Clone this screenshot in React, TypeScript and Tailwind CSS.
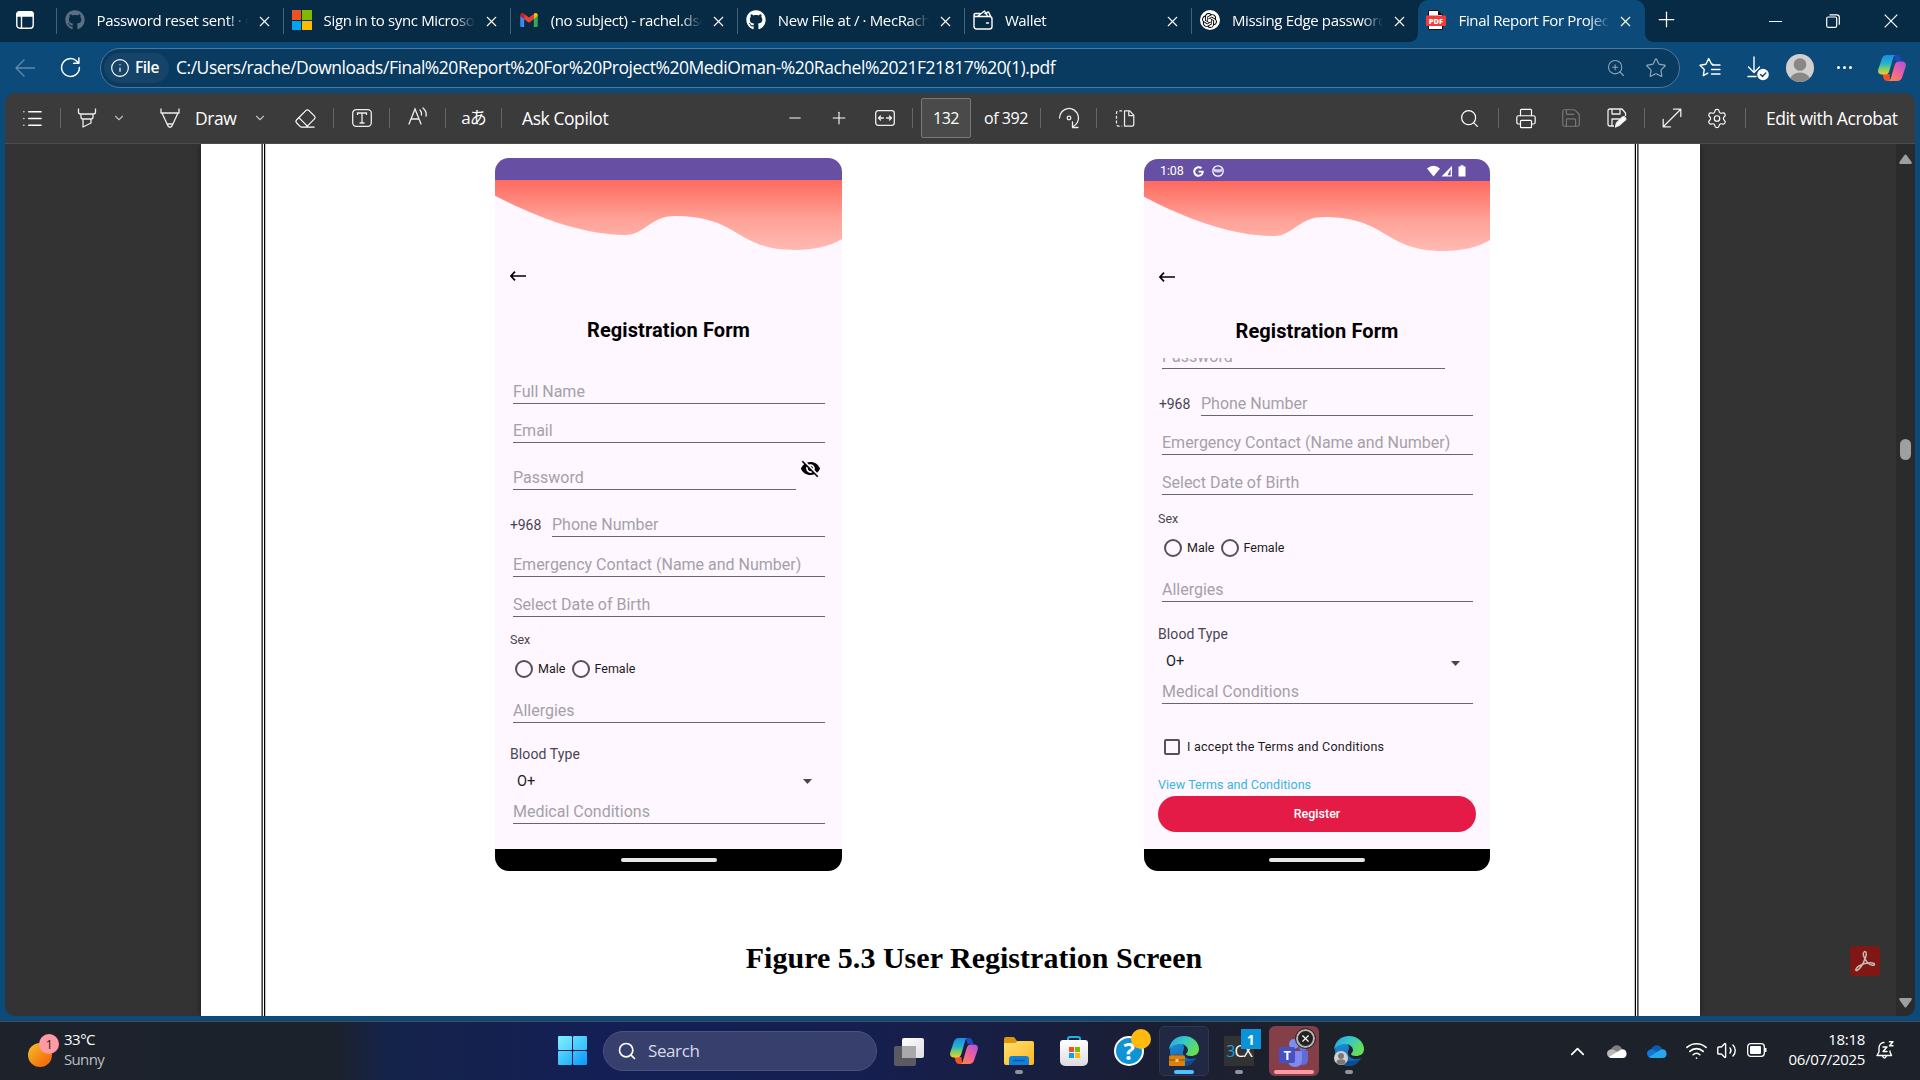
import type { ReactNode } from "react";
import { List, Eraser, Search, Printer, Save, Settings, Star, ZoomIn, Info, ChevronDown, ChevronUp, Wifi, Volume2, Minus, Plus, X } from "lucide-react";
import { FaGithub, FaGoogle } from "react-icons/fa";
import { SiOpenai } from "react-icons/si";
import { MdVisibilityOff } from "react-icons/md";

function Copilot({ id, className }: { id: string; className: string }) {
  return (
    <svg viewBox="0 0 28 28" className={className}>
      <defs>
        <linearGradient id={id + "a"} x1="0" y1="0" x2="0" y2="1">
          <stop offset="0" stopColor="#1a8be8" />
          <stop offset=".45" stopColor="#27b5c8" />
          <stop offset=".75" stopColor="#8fd05c" />
          <stop offset="1" stopColor="#f7c92a" />
        </linearGradient>
        <linearGradient id={id + "b"} x1="1" y1="0" x2="0" y2="1">
          <stop offset="0" stopColor="#a552e8" />
          <stop offset=".5" stopColor="#f0609a" />
          <stop offset="1" stopColor="#fb8f3c" />
        </linearGradient>
      </defs>
      <path d="M16 1h3c2 0 3 1.500 3.500 3l1 3h-6z" fill="#1b49c4" />
      <path d="M12 27H9c-2 0-3-1.500-3.500-3l-1-4h7z" fill="#f4502c" />
      <path d="M9 1h9c-2 0-2.700 2-3.200 4l-3.500 12c-.7 2.500-2 3.500-4.300 3.500H4c-3.500 0-4.500-2.500-3.600-5.500L3.800 5C4.700 2.200 6 1 9 1z" fill={`url(#${id}a)`} />
      <path d="M19 27h-9c2 0 2.700-2 3.200-4l3.500-12c.7-2.500 2-3.500 4.300-3.500h3c3.500 0 4.500 2.500 3.600 5.500L24.200 23c-.9 2.800-2.200 4-5.200 4z" fill={`url(#${id}b)`} />
    </svg>
  );
}

function Gmail() {
  return (
    <svg viewBox="0 0 20 16" className="h-[14px] w-[18px]">
      <path d="M0 3v11.500c0 .8.600 1.500 1.400 1.500H4.500V6z" fill="#4285f4" />
      <path d="M20 3v11.500c0 .8-.6 1.500-1.400 1.500h-3.100V6z" fill="#34a853" />
      <path d="M0 2.500C0 .3 2.300-.8 4 .5l.5.4v6L0 3.500z" fill="#c5221f" />
      <path d="M20 2.500c0-2.200-2.300-3.300-4-2l-.5.4v6L20 3.500z" fill="#fbbc04" />
      <path d="M4.500 1 10 5l5.500-4v6L10 11 4.500 7z" fill="#ea4335" />
    </svg>
  );
}

function FourSquares({ className, gap }: { className: string; gap: string }) {
  return (
    <div className={"grid grid-cols-2 grid-rows-2 " + gap + " " + className}>
      <div className="bg-[#f25022]" />
      <div className="bg-[#7fba00]" />
      <div className="bg-[#00a4ef]" />
      <div className="bg-[#ffb900]" />
    </div>
  );
}

function PdfIcon() {
  return (
    <svg viewBox="0 0 20 20" className="size-5">
      <path d="M2.500.5h9.500l4.500 4.500v14.500H2.500z" fill="#fff" stroke="#111" />
      <path d="M12 .5V5h4.500z" fill="#111" />
      <rect x="0" y="5.500" width="20" height="10.500" rx="1.200" fill="#f23b3b" />
      <text x="10" y="13.600" textAnchor="middle" fontFamily="Open Sans, sans-serif" fontWeight="800" fontSize="7.500" fill="#fff">PDF</text>
    </svg>
  );
}

function Tab({ icon, title }: { icon: ReactNode; title: string }) {
  return (
    <div className="flex h-[42px] w-[227.1px] shrink-0 items-center">
      <div className="mb-px h-[26px] w-px bg-[#44637b]" />
      <div className="mb-0.5 ml-[8px] flex size-5 items-center justify-center">{icon}</div>
      <div className="mb-0.5 ml-3 w-[151px] overflow-hidden whitespace-nowrap text-[15px] leading-5 tracking-[-0.36px] [mask-image:linear-gradient(to_right,black_86%,transparent)]">{title}</div>
      <X className="ml-[8px] size-[17px]" strokeWidth={1.5} />
    </div>
  );
}

function Sep({ className = "" }: { className?: string }) {
  return <div className={"h-5 w-px shrink-0 bg-[#666] " + className} />;
}

function Cell({ className, children }: { className: string; children: ReactNode }) {
  return <div className={"flex shrink-0 items-center justify-center " + className}>{children}</div>;
}

function TabStrip() {
  return (
    <div className="flex h-[42px] shrink-0 bg-[#072a45]">
      <div className="flex w-[55.5px] shrink-0 items-center pl-[15.5px]">
        <svg viewBox="0 0 18 18" className="mb-0.5 size-[18px]" fill="none" stroke="#fff" strokeWidth="1.400">
          <rect x=".8" y=".8" width="16.400" height="16.400" rx="3" />
          <path d="M1 2.500C1 1.500 2 1 3 1h12c1 0 2 .5 2 1.500V5H1z" fill="#fff" />
          <path d="M5.500 5v12" />
        </svg>
      </div>
      <Tab icon={<FaGithub className="size-5 text-[#5b7183]" />} title="Password reset sent! · GitHub" />
      <Tab icon={<FourSquares className="size-5" gap="gap-px" />} title="Sign in to sync Microsoft Edge" />
      <Tab icon={<Gmail />} title="(no subject) - rachel.dsouza" />
      <Tab icon={<FaGithub className="size-5" />} title="New File at / · MecRachel" />
      <Tab
        icon={
          <svg viewBox="0 0 20 20" className="size-5" fill="none" stroke="#fff" strokeWidth="1.400" strokeLinecap="round" strokeLinejoin="round">
            <path d="M1 5v11.500A2.500 2.500 0 0 0 3.500 19h13a2.500 2.500 0 0 0 2.500-2.500V9a2.500 2.500 0 0 0-2.500-2.500H2.500a1.500 1.500 0 0 1 0-3H7M5 6l6.500-5 3 5M12 3.500l3.500-1.500 2 4M13.500 13h2" />
          </svg>
        }
        title="Wallet"
      />
      <Tab
        icon={
          <div className="flex size-5 items-center justify-center rounded-full bg-white text-black">
            <SiOpenai className="size-[15px]" />
          </div>
        }
        title="Missing Edge passwords"
      />
      <div className="relative flex w-[227px] shrink-0 items-center rounded-t-[10px] bg-[#0c4a7a]">
        <div className="absolute -left-2 bottom-0 size-2 bg-[radial-gradient(circle_at_0_0,transparent_7.500px,#0c4a7a_8px)]" />
        <div className="absolute -right-2 bottom-0 size-2 bg-[radial-gradient(circle_at_100%_0,transparent_7.500px,#0c4a7a_8px)]" />
        <div className="mb-0.5 ml-[7.5px]"><PdfIcon /></div>
        <div className="mb-0.5 ml-[13px] w-[151px] overflow-hidden whitespace-nowrap text-[15px] leading-5 tracking-[-0.36px] [mask-image:linear-gradient(to_right,black_86%,transparent)]">Final Report For Project Medi</div>
        <X className="ml-[7px] size-[17px]" strokeWidth={1.5} />
      </div>
      <Cell className="w-[42px]"><Plus className="mb-[3px] size-[25px]" strokeWidth={1.2} /></Cell>
      <Cell className="ml-[65px] w-[46px]"><div className="h-px w-[13px] bg-white" /></Cell>
      <Cell className="ml-[12px] w-[46px]">
        <svg viewBox="0 0 14 14" className="size-[14px]" fill="none" stroke="#fff" strokeWidth="1.200">
          <rect x=".7" y="3" width="10" height="10.300" rx="1.500" />
          <path d="M3.500.8h7.300a2.500 2.500 0 0 1 2.500 2.500v7.500" />
        </svg>
      </Cell>
      <Cell className="ml-[12px] w-[46px]">
        <svg viewBox="0 0 14 14" className="size-[14px]" stroke="#fff" strokeWidth="1.200"><path d="M.7.7l12.600 12.600M13.300.7.7 13.300" /></svg>
      </Cell>
    </div>
  );
}

function AddressBar() {
  return (
    <div className="flex h-[51px] shrink-0 items-center bg-[#0c4a7a]">
      <Cell className="w-[50px]">
        <svg viewBox="0 0 20 18" className="h-[18px] w-5" fill="none" stroke="#5f8bae" strokeWidth="1.300" strokeLinecap="round" strokeLinejoin="round"><path d="M9 1 1 9l8 8M1 9h18.500" /></svg>
      </Cell>
      <Cell className="w-10">
        <svg viewBox="0 0 20 20" className="size-[21px]" fill="none" stroke="#fff" strokeWidth="1.400" strokeLinecap="round" strokeLinejoin="round"><path d="M18.500 10A8.500 8.500 0 1 1 16 4l2 2M18 1v5h-5" /></svg>
      </Cell>
      <div className="ml-[10px] flex h-10 w-[1580px] shrink-0 items-center rounded-full border border-[#507797] bg-[#093a5f]">
        <div className="ml-[3px] flex h-[30px] w-[65px] items-center rounded-full bg-[#154468] pl-[6px]">
          <Info className="size-[20px]" strokeWidth={1.4} />
          <span className="mb-px ml-[5px] text-[15.5px] font-semibold leading-5 tracking-[-0.5px]">File</span>
        </div>
        <div className="mb-[2px] ml-[7px] w-[900px] whitespace-nowrap text-[17.5px] leading-6 tracking-[-0.475px]">C:/Users/rache/Downloads/Final%20Report%20For%20Project%20MediOman-%20Rachel%2021F21817%20(1).pdf</div>
        <ZoomIn className="ml-[530px] size-5 text-[#8fa8bb]" strokeWidth={1.3} />
        <Star className="ml-[19px] size-[22px] text-[#8fa8bb]" strokeWidth={1.3} />
      </div>
      <Cell className="ml-[19px] w-[22px]">
        <svg viewBox="0 0 22 22" className="size-[22px]" fill="none" stroke="#fff" strokeWidth="1.400" strokeLinecap="round" strokeLinejoin="round">
          <path d="M14 7.500 12.500 7 9.700 1.500 6.900 7.300 1 8.200l4.300 4.200-1 6.200 4.500-2.400M13.500 8H21M12.500 12.500H21M12.500 17H21" />
        </svg>
      </Cell>
      <Cell className="ml-[25px] w-[24px]">
        <svg viewBox="0 0 24 26" className="h-[26px] w-6" fill="none" stroke="#fff" strokeWidth="1.400" strokeLinecap="round" strokeLinejoin="round">
          <path d="M8 2v15M2.500 12 8 17.500l5.500-5.500M2 21.500h8" />
          <circle cx="17" cy="19.500" r="5.800" fill="#fff" stroke="none" />
          <path d="m14.500 19.500 2 2 3.300-3.500" stroke="#0c4a7a" />
        </svg>
      </Cell>
      <Cell className="ml-[16px] w-7">
        <svg viewBox="0 0 28 28" className="size-7">
          <clipPath id="avatar"><circle cx="14" cy="14" r="14" /></clipPath>
          <g clipPath="url(#avatar)">
            <rect width="28" height="28" fill="#d2d0ce" />
            <circle cx="14" cy="10.500" r="6.300" fill="#8a8886" />
            <ellipse cx="14" cy="25" rx="9.500" ry="6.500" fill="#8a8886" />
          </g>
        </svg>
      </Cell>
      <Cell className="ml-[22px] w-4 gap-[3px]">
        <span className="size-[3px] rounded-full bg-white" />
        <span className="size-[3px] rounded-full bg-white" />
        <span className="size-[3px] rounded-full bg-white" />
      </Cell>
      <Cell className="ml-[26px] w-7"><Copilot id="top" className="size-7" /></Cell>
    </div>
  );
}

function PdfToolbar() {
  return (
    <div className="flex h-[51px] shrink-0 items-center border-b border-[#4d4d4d] bg-[#3b3b3b] text-[17.5px] tracking-[-0.43px]">
      <Cell className="w-[55px]"><List className="size-[23px]" strokeWidth={1.4} /></Cell>
      <Sep />
      <Cell className="w-[51px]">
        <svg viewBox="0 0 20 20" className="size-5" fill="none" stroke="#eee" strokeWidth="1.300" strokeLinejoin="round"><path d="M1.500.5V4q0 2 2 2h13q2 0 2-2V.5M4 6v3q0 2 2 2h8q2 0 2-2V6M6 11v8l8-4v-4" /></svg>
      </Cell>
      <Cell className="w-[14px]"><ChevronDown className="size-[14px] text-[#bbb]" strokeWidth={2} /></Cell>
      <Cell className="ml-[20px] w-[48px]">
        <svg viewBox="0 0 20 20" className="size-5" fill="none" stroke="#eee" strokeWidth="1.300" strokeLinejoin="round"><path d="M1 .5V5h18V.5M2 5l6 13q2 2.500 4 0l6-13M7.500 16h5" /></svg>
      </Cell>
      <span className="ml-[1px] w-[42px]">Draw</span>
      <Cell className="ml-[16px] w-[14px]"><ChevronDown className="size-[14px] text-[#bbb]" strokeWidth={2} /></Cell>
      <Cell className="ml-[11px] w-[54px]"><Eraser className="size-[23px]" strokeWidth={1.2} /></Cell>
      <Sep className="ml-px" />
      <Cell className="w-[55px]">
        <svg viewBox="0 0 20 20" className="size-5" fill="none" stroke="#eee" strokeWidth="1.300"><rect x=".7" y="1.700" width="18.600" height="16.600" rx="3.500" /><path d="M5.500 7V5h9v2M10 5v10M7.500 15h5" /></svg>
      </Cell>
      <Sep />
      <Cell className="w-[55px]">
        <svg viewBox="0 0 20 20" className="mb-1 size-5" fill="none" stroke="#eee" strokeWidth="1.300" strokeLinecap="round"><path d="m1 18 6-15 6 15M3 13h8M12 4q2 2 1.500 5M15 2q4 3.500 3 8" /></svg>
      </Cell>
      <Sep />
      <Cell className="w-[55px]"><span className="font-['Open_Sans','Noto_Sans_CJK_JP',sans-serif] text-[17px] tracking-[-1px]">aあ</span></Cell>
      <Sep />
      <span className="ml-[20px] w-[92px] whitespace-nowrap">Ask Copilot</span>
      <Cell className="ml-[171px] w-5"><Minus className="size-[18px]" strokeWidth={1.3} /></Cell>
      <Cell className="ml-[24px] w-5"><Plus className="size-[20px]" strokeWidth={1.3} /></Cell>
      <Cell className="ml-[26px] w-5">
        <svg viewBox="0 0 20 16" className="h-4 w-5" fill="none" stroke="#eee" strokeWidth="1.300" strokeLinecap="round" strokeLinejoin="round"><rect x=".7" y=".7" width="18.600" height="14.600" rx="2.500" /><path d="M5.500 6 3.500 8l2 2M3.500 8h5M14.500 6l2 2-2 2M16.500 8h-5" /></svg>
      </Cell>
      <Sep className="ml-[17px]" />
      <div className="ml-[8px] flex h-10 w-[50px] items-center justify-center rounded-[2px] border border-[#787878] bg-[#4a4a4a] text-[16px]">132</div>
      <span className="ml-[13px] w-[44px] whitespace-nowrap text-[16px]">of 392</span>
      <Sep className="ml-[12px]" />
      <Cell className="w-[55px]">
        <svg viewBox="0 0 22 22" className="size-[22px]" fill="none" stroke="#eee" strokeWidth="1.300" strokeLinecap="round" strokeLinejoin="round"><path d="M1.500 11a9.500 9.500 0 1 1 13 8.800M14.500 15v5.500H20" /><circle cx="11" cy="11" r="1.800" /></svg>
      </Cell>
      <Sep />
      <Cell className="w-[55px]">
        <svg viewBox="0 0 20 18" className="h-[17px] w-5" fill="none" stroke="#eee" strokeWidth="1.300" strokeLinejoin="round"><path d="M9.500 1H15l4.300 4.500V15q0 2-2 2H9.500zM14 1v5h5" /><path d="M7 1H3Q1 1 1 3v12q0 2 2 2h4" strokeDasharray="3 2" /></svg>
      </Cell>
      <Cell className="ml-[307px] w-[21px]"><Search className="size-[21px]" strokeWidth={1.4} /></Cell>
      <Sep className="ml-[18px]" />
      <Cell className="ml-[16px] w-[22px]"><Printer className="size-[23px]" strokeWidth={1.3} /></Cell>
      <Cell className="ml-[23px] w-[22px]"><Save className="size-[22px] text-[#777]" strokeWidth={1.3} /></Cell>
      <Cell className="ml-[24px] w-[22px]">
        <svg viewBox="0 0 20 20" className="size-5" fill="none" stroke="#eee" strokeWidth="1.300" strokeLinejoin="round"><path d="M18.500 8V5L15 1H3Q1 1 1 3v13q0 2 2 2h4M5 1v5h8V1M5 18v-7h8" /><path d="m8.500 19 1-4 6-6q2-1 3 1t-1 2.500l-5.500 5z" fill="#fff" /></svg>
      </Cell>
      <Sep className="ml-[16px]" />
      <Cell className="ml-[16px] w-[22px]">
        <svg viewBox="0 0 20 20" className="size-5" fill="none" stroke="#eee" strokeWidth="1.300" strokeLinecap="round" strokeLinejoin="round"><path d="M1.500 18.500l17-17M11.500 1.200h7.300v7.300M8.500 18.800H1.200v-7.300" /></svg>
      </Cell>
      <Cell className="ml-[23px] w-[22px]"><Settings className="size-[23px]" strokeWidth={1.3} /></Cell>
      <Sep className="ml-[17px]" />
      <span className="ml-[20px] whitespace-nowrap">Edit with Acrobat</span>
    </div>
  );
}

function Field({ label, className = "" }: { label: string; className?: string }) {
  return (
    <div className={"h-[23px] shrink-0 whitespace-nowrap border-b border-[#69656d] text-[16px] leading-[22px] text-[#a5a0a8] " + className}>{label}</div>
  );
}

function Wave() {
  return (
    <svg viewBox="0 0 347 70" preserveAspectRatio="none" className="block h-[70px] w-full shrink-0">
      <defs>
        <linearGradient id="coral" x1="0" y1="0" x2="0" y2="1">
          <stop offset="0" stopColor="#ff6a5f" />
          <stop offset=".55" stopColor="#ffa196" />
          <stop offset="1" stopColor="#ffbab3" />
        </linearGradient>
      </defs>
      <path d="M0 0V15.700C42 38 90 55 130 55 150 55 155 36 180 36 245 36 240 70 300 70 320 70 335 66 347 59V0z" fill="url(#coral)" />
    </svg>
  );
}

function PhoneHead() {
  return (
    <>
      <Wave />
      <svg viewBox="0 0 16 10" className="ml-[15px] mt-[21px] h-[10px] w-4 shrink-0" fill="none" stroke="#000" strokeWidth="1.700"><path d="M5 .6.900 5 5 9.400M1 5h15" /></svg>
      <div className="mt-[37px] h-6 shrink-0 text-center text-[20px] font-bold leading-6 tracking-[0.1px] text-black">Registration Form</div>
    </>
  );
}

function SexRow() {
  return (
    <div className="ml-[20px] mt-[10px] flex h-[18px] shrink-0 items-center text-[12.5px] leading-[18px] text-[#1d1b20]">
      <div className="size-[18px] rounded-full border-2 border-[#55515b]" />
      <span className="ml-[5px] w-[28px]">Male</span>
      <div className="ml-[5.5px] size-[18px] rounded-full border-2 border-[#55515b]" />
      <span className="ml-[5px]">Female</span>
    </div>
  );
}

function BloodRow({ className, arrow }: { className: string; arrow: string }) {
  return (
    <div className={"ml-[22px] mr-[30px] flex h-[18px] shrink-0 items-center justify-between text-[14.5px] leading-[18px] text-[#1d1b20] " + className}>
      <span className="mt-[2px]">O+</span>
      <svg viewBox="0 0 9 5" className={"h-[5px] w-[9px] " + arrow}><path d="M0 0h9L4.500 5z" fill="#49454f" /></svg>
    </div>
  );
}

function PhoneRow({ className }: { className: string }) {
  return (
    <div className={"flex h-[23px] shrink-0 " + className}>
      <span className="ml-[15px] w-[42px] text-[14px] leading-[22px] tracking-[-0.1px] text-[#49454f]">+968</span>
      <Field label="Phone Number" className="mr-[17px] flex-1" />
    </div>
  );
}

function NavBar() {
  return (
    <div className="mt-auto flex h-[22px] shrink-0 items-center justify-center bg-black">
      <div className="h-1 w-[96px] rounded-full bg-[#e8e8ea]" />
    </div>
  );
}

function PhoneOne() {
  return (
    <div className="ml-[229px] mt-[14px] flex h-[713px] w-[347px] shrink-0 flex-col overflow-hidden rounded-[14px] bg-[#fef7ff] font-['Roboto',sans-serif]">
      <div className="h-[22px] shrink-0 bg-[#6750a4]" />
      <PhoneHead />
      <Field label="Full Name" className="ml-[18px] mr-[17px] mt-[39px]" />
      <Field label="Email" className="ml-[18px] mr-[17px] mt-4" />
      <div className="ml-[18px] mt-4 flex h-[31px] shrink-0 items-end">
        <Field label="Password" className="w-[283px]" />
        <MdVisibilityOff className="mb-[11px] ml-[4px] size-[21px] text-black" />
      </div>
      <PhoneRow className="mt-6" />
      <Field label="Emergency Contact (Name and Number)" className="ml-[18px] mr-[17px] mt-[17px]" />
      <Field label="Select Date of Birth" className="ml-[18px] mr-[17px] mt-[17px]" />
      <div className="ml-[15px] mt-[13px] h-5 shrink-0 text-[12.5px] leading-5 text-[#49454f]">Sex</div>
      <SexRow />
      <Field label="Allergies" className="ml-[18px] mr-[17px] mt-[22px]" />
      <div className="ml-[15px] mt-[21px] h-5 shrink-0 text-[14px] leading-5 tracking-[0.1px] text-[#49454f]">Blood Type</div>
      <BloodRow className="mt-[8px]" arrow="" />
      <Field label="Medical Conditions" className="ml-[18px] mr-[17px] mt-[11px]" />
      <NavBar />
    </div>
  );
}

function PhoneTwo() {
  return (
    <div className="ml-[302px] mt-[15px] flex h-[712px] w-[346px] shrink-0 flex-col overflow-hidden rounded-[14px] bg-[#fef7ff] font-['Roboto',sans-serif]">
      <div className="flex h-[22px] shrink-0 items-center bg-[#6750a4] pl-[16px] text-[12.5px] text-white">
        <span className="mt-0.5 w-[24px] tracking-[-0.1px]">1:08</span>
        <FaGoogle className="ml-[9px] mt-0.5 size-[11px]" />
        <svg viewBox="0 0 12 12" className="ml-[8px] mt-0.5 size-3"><circle cx="6" cy="6" r="5.200" fill="none" stroke="#fff" strokeWidth="1.300" /><path d="M2 3.500 4 4.300h4l2-.8v3Q8.500 7.500 6 7.500T2 6.500z" fill="#d7cdee" /></svg>
        <svg viewBox="0 0 40 12" className="ml-auto mr-[23px] mt-0.5 h-3 w-10" fill="#fff"><path d="M0 3.500Q6.500-2 13 3.500L6.500 11.500z" /><path d="M14.500 11.500 25 .8v10.700zm6-1.300h3.200V4z" fillRule="evenodd" /><path d="M31.500 1.500h2V.3h3v1.200h2v10h-7z" /></svg>
      </div>
      <PhoneHead />
      <div className="mt-[15px] flex h-[11px] shrink-0 flex-col justify-end overflow-hidden">
        <Field label="Password" className="ml-[18px] w-[283px]" />
      </div>
      <PhoneRow className="mt-6" />
      <Field label="Emergency Contact (Name and Number)" className="ml-[18px] mr-[17px] mt-4" />
      <Field label="Select Date of Birth" className="ml-[18px] mr-[17px] mt-[17px]" />
      <div className="ml-[14px] mt-[14px] h-5 shrink-0 text-[12.5px] leading-5 text-[#49454f]">Sex</div>
      <SexRow />
      <Field label="Allergies" className="ml-[18px] mr-[17px] mt-[22px]" />
      <div className="ml-[14px] mt-[22px] h-5 shrink-0 text-[14px] leading-5 tracking-[0.1px] text-[#49454f]">Blood Type</div>
      <BloodRow className="mt-[8px]" arrow="mt-[4px]" />
      <Field label="Medical Conditions" className="ml-[18px] mr-[17px] mt-[11px]" />
      <div className="ml-[20px] mt-[34px] flex h-[18px] shrink-0 items-center text-[12.5px] tracking-[0.23px] text-[#1d1b20]">
        <div className="size-4 rounded-[2px] border-2 border-[#55515b]" />
        <span className="ml-[7px] whitespace-nowrap">I accept the Terms and Conditions</span>
      </div>
      <div className="ml-[14px] mt-[19px] h-5 shrink-0 text-[12.5px] leading-5 tracking-[0.05px] text-[#33b5e5]">View Terms and Conditions</div>
      <div className="mx-[14px] mt-px flex h-9 shrink-0 items-center justify-center rounded-full bg-[#e31b46] text-[12.5px] font-medium text-white">Register</div>
      <NavBar />
    </div>
  );
}

function Document() {
  return (
    <div className="flex h-[872px] shrink-0 overflow-hidden bg-[#333]">
      <div className="ml-[196px] flex w-[1499px] flex-col bg-white shadow-[0_0_6px_rgba(0,0,0,0.5)]">
        <div className="flex h-full">
          <div className="ml-[60px] flex h-full w-[5px]">
            <div className="w-px bg-[#888]" />
            <div className="w-px bg-[#444]" />
            <div className="w-px bg-white" />
            <div className="w-px bg-black" />
            <div className="w-px bg-[#c4c4c4]" />
          </div>
          <div className="flex w-[1368px] flex-col">
            <div className="flex h-[740px]">
              <PhoneOne />
              <PhoneTwo />
            </div>
            <div className="mt-[56px] pl-[48px] text-center font-['Liberation_Serif',serif] text-[30px] font-bold leading-9 tracking-[0.02px] text-black">Figure 5.3 User Registration Screen</div>
          </div>
          <div className="flex h-full w-[5px]">
            <div className="w-px bg-[#c4c4c4]" />
            <div className="w-px bg-black" />
            <div className="w-px bg-white" />
            <div className="w-px bg-[#444]" />
            <div className="w-px bg-[#888]" />
          </div>
        </div>
      </div>
      <div className="flex flex-1 flex-col justify-end pb-[40px] pl-[150px]">
        <div className="flex size-[30px] items-center justify-center rounded-[4px] bg-[#7f1714]">
          <svg viewBox="0 0 22 22" className="size-[22px]" fill="none" stroke="#c9bcbc" strokeWidth="1.500"><path d="M10 2c2-1.500 3 1.500 1.500 5.500C9.500 13 6 19 3 20.500c-2 .5-1.500-2.500 2-4.500 4-2.300 10-3.500 13.500-3 3 .5 2.500 2.500 0 2.300C14 15 10.500 9 9.500 5.500 9 3.500 9.300 2.500 10 2z" /></svg>
        </div>
      </div>
      <div className="flex w-[19px] flex-col items-center bg-[#2b2b2b] pt-[10px]">
        <svg viewBox="0 0 13 10" className="h-[10px] w-[13px] shrink-0"><path d="M5.500 1q1-1 2 0l5 7q.8 2-.8 2H1.300Q-.3 10 .5 8z" fill="#9f9f9f" /></svg>
        <div className="mt-[275px] h-[21px] w-[11px] shrink-0 rounded-full bg-[#9f9f9f]" />
        <svg viewBox="0 0 13 10" className="mt-[538px] h-[10px] w-[13px] shrink-0"><path d="M5.500 9q1 1 2 0l5-7q.8-2-.8-2H1.300Q-.3 0 .5 2z" fill="#9f9f9f" /></svg>
      </div>
    </div>
  );
}

function Edge({ id }: { id: string }) {
  return (
    <svg viewBox="0 0 30 30" className="size-[30px]">
      <defs>
        <linearGradient id={id + "g"} x1="0" y1="0" x2="1" y2=".5">
          <stop offset="0" stopColor="#2b9fe8" />
          <stop offset=".5" stopColor="#35c7c9" />
          <stop offset="1" stopColor="#66df53" />
        </linearGradient>
        <linearGradient id={id + "b"} x1="0" y1="0" x2=".4" y2="1">
          <stop offset="0" stopColor="#1d90d6" />
          <stop offset="1" stopColor="#1260b8" />
        </linearGradient>
      </defs>
      <path d="M1 15C1 8 7 5 13 8c3 1.500 2 5 1 8-1 5 6 9 13 6-3 5-7 8-12 8C7 30 1 24 1 15z" fill={`url(#${id}b)`} />
      <path d="M9 18c0 7 8 9.500 18 4.500-3 5-7 7.500-12 7.500-6-1-10-8-6-12z" fill="#0d4a8c" />
      <path d="M0 14C1 5 7 0 15 0c9 0 15 6.500 15 13 0 5-4 7-8 7-3 0-5-.8-5-2 0-.8 2-1.500 2-4 0-3-3.500-6-8-6-5 0-9 2-11 6z" fill={`url(#${id}g)`} />
    </svg>
  );
}

function Dot() {
  return <div className="absolute bottom-[6px] h-1 w-2 rounded-full bg-[#8f939e]" />;
}

function TaskIcon({ children }: { children: ReactNode }) {
  return <div className="relative flex h-full w-[55px] shrink-0 items-center justify-center pb-px">{children}</div>;
}

function Cloud({ back, mid, front }: { back: string; mid: string; front: string }) {
  return (
    <svg viewBox="0 0 20 13" className="h-[13px] w-5 shrink-0">
      <path d="M4 5C6-1 13-1 15 4l-5 5z" fill={back} />
      <path d="M0 8.500C0 6 2.500 4 5.500 4.300L13 8l-8 5C2 13 0 11 0 8.500z" fill={mid} />
      <path d="M2 12 12.500 5.500C14.500 3.500 18 4 19 6.500c1.500 3 0 6.500-3.500 6.500H5Q3 13 2 12z" fill={front} />
    </svg>
  );
}

function Taskbar() {
  return (
    <div className="flex h-[59px] shrink-0 items-center border-t border-[#4a4b52] bg-[linear-gradient(to_right,#1d222b_0px,#1c222c_335px,#14234a_385px,#141f55_600px,#151f50_860px,#1a1e36_1120px,#1d2129_1320px,#1d212a_1920px)] text-[15px] tracking-[-0.3px]">
      <div className="relative mb-[2px] ml-[28px] h-[33px] w-[31px] shrink-0">
        <div className="absolute bottom-0 left-0 size-6 rounded-full bg-[linear-gradient(135deg,#f2c32e,#f4720d_75%)]" />
        <div className="absolute right-0 top-0 flex size-5 items-center justify-center rounded-full bg-[#ff99a4] text-[13px] leading-5 text-[#222]">1</div>
      </div>
      <div className="mb-[4px] ml-[5px] w-[61px] shrink-0 leading-5">
        <div className="tracking-[-0.5px] text-white">33°C</div>
        <div className="tracking-[-0.65px] text-[#bdbfc3]">Sunny</div>
      </div>
      <div className="mb-px ml-[433px] grid size-[29px] shrink-0 grid-cols-2 grid-rows-2 gap-px">
        <div className="rounded-[1px] bg-[linear-gradient(135deg,#7cf0ff,#56d3fb)]" />
        <div className="rounded-[1px] bg-[linear-gradient(135deg,#5cdcff,#35bdf9)]" />
        <div className="rounded-[1px] bg-[linear-gradient(135deg,#56d6ff,#26aefb)]" />
        <div className="rounded-[1px] bg-[linear-gradient(135deg,#3cc0fc,#0698fd)]" />
      </div>
      <div className="mb-px ml-4 flex h-10 w-[274px] shrink-0 items-center rounded-full border border-[#4a527f] bg-[#373f6c]">
        <Search className="ml-[13px] size-[20px]" strokeWidth={2} />
        <span className="ml-[11px] text-[17px] tracking-[-0.4px] text-[#d8dae6]">Search</span>
      </div>
      <div className="ml-[4.5px] flex h-full shrink-0">
        <TaskIcon>
          <div className="relative size-[30px]">
            <div className="absolute bottom-0 left-0 h-5 w-[22px] rounded-[2px] bg-[#5a5a60]" />
            <div className="absolute right-0 top-[2px] h-5 w-[22px] rounded-[2px] bg-[linear-gradient(135deg,#ffffff,#dedee2)]" />
            <div className="absolute bottom-[8px] left-2 h-[12px] w-[14px] bg-[#a9a9ad]" />
          </div>
        </TaskIcon>
        <TaskIcon><Copilot id="task" className="size-7" /></TaskIcon>
        <TaskIcon>
          <svg viewBox="0 0 30 28" className="h-7 w-[30px]">
            <defs><linearGradient id="fold" x1="0" y1="0" x2="1" y2="1"><stop offset="0" stopColor="#ffdf70" /><stop offset="1" stopColor="#fcb81f" /></linearGradient></defs>
            <path d="M0 2q0-2 2-2h8l3 4h15v10H0z" fill="#d9980b" />
            <path d="M0 6h11l3-2h14q2 0 2 2v20q0 2-2 2H2q-2 0-2-2z" fill="url(#fold)" />
            <path d="M5 28v-6q0-3 3-3h14q3 0 3 3v6z" fill="#1280d8" /><path d="M9 23.500h12" stroke="#0a5aa8" strokeWidth="1.500" />
          </svg>
          <Dot />
        </TaskIcon>
        <TaskIcon>
          <div className="relative h-[30px] w-7">
            <div className="absolute left-[7px] top-0 h-2 w-[14px] rounded-t-[3px] border-2 border-b-0 border-[#20b0ea]" />
            <div className="absolute bottom-0 flex h-[26px] w-7 items-center justify-center rounded-[3px] rounded-b-[5px] bg-[linear-gradient(#fff,#dcdce0)]">
              <FourSquares className="size-[11px]" gap="gap-px" />
            </div>
          </div>
        </TaskIcon>
        <TaskIcon>
          <div className="flex size-[30px] items-center justify-center rounded-full border-2 border-white bg-[#0f93d6] text-[24px] font-bold leading-none">?</div>
          <div className="absolute right-[6px] top-[7px] size-5 rounded-full bg-[#ffb90f]" />
        </TaskIcon>
        <TaskIcon>
          <div className="relative flex size-[50px] items-center justify-center rounded-[5px] border border-[#2f364e] bg-[#212843]">
            <Edge id="e1" />
            <svg viewBox="0 0 16 12" className="absolute bottom-[9px] left-[9px] h-3 w-4"><path d="M5 2V.7h6V2" stroke="#8a4a05" fill="none" /><rect y="1.500" width="16" height="10.500" rx="1" fill="#d9820f" /><path d="M0 6h16" stroke="#8f4f06" /><rect x="6.500" y="5" width="3" height="3" fill="#ffd36b" /></svg>
          </div>
          <div className="absolute bottom-[6px] h-1 w-5 rounded-full bg-[#4cc2ff]" />
        </TaskIcon>
        <TaskIcon>
          <div className="flex size-[30px] items-center justify-center bg-[#323232] text-[16px] tracking-[-1px]"><span className="text-[#1ba0dc]">3</span>CX</div>
          <div className="absolute right-[6px] top-[7px] flex size-5 items-center justify-center bg-[#0a93d8] text-[14px] font-bold">1</div>
          <Dot />
        </TaskIcon>
        <TaskIcon>
          <div className="flex size-[50px] items-center justify-center rounded-[6px] bg-[#853f48]">
            <svg viewBox="0 0 32 30" className="mt-1 h-[30px] w-8">
              <circle cx="25" cy="9" r="4" fill="#6a76e0" />
              <circle cx="16" cy="6" r="5" fill="#7f8cf0" />
              <path d="M18 13h12v8q0 6-6 6h-4z" fill="#5f6bd8" />
              <path d="M10 13h14v9q0 7-7 7t-7-7z" fill="#7f8af0" />
              <rect x="1" y="9" width="16" height="16" rx="2" fill="#4551c0" />
              <text x="9" y="22" textAnchor="middle" fontFamily="Open Sans, sans-serif" fontWeight="700" fontSize="13" fill="#fff">T</text>
            </svg>
          </div>
          <div className="absolute right-[7px] top-[7px] flex size-[19px] items-center justify-center rounded-full border-2 border-[#b5b5b5] bg-[#222] outline-1 outline-[#222]"><X className="size-[11px]" strokeWidth={2.5} /></div>
          <div className="absolute bottom-[6px] h-1 w-10 rounded-full bg-[#ff99a4]" />
        </TaskIcon>
        <TaskIcon>
          <Edge id="e2" />
          <svg viewBox="0 0 14 14" className="absolute bottom-[15px] left-[12px] size-[14px]"><circle cx="7" cy="7" r="7" fill="#d2d0ce" /><circle cx="7" cy="5" r="3" fill="#7a7876" /><ellipse cx="7" cy="11" rx="4.500" ry="2.700" fill="#7a7876" /></svg>
          <Dot />
        </TaskIcon>
      </div>
      <ChevronUp className="ml-[189px] size-[23px] shrink-0" strokeWidth={1.8} />
      <div className="ml-[18px] flex shrink-0"><Cloud back="#7d7d82" mid="#b9b9bd" front="#ffffff" /></div>
      <div className="ml-5 flex shrink-0"><Cloud back="#0b5cb0" mid="#0f78d4" front="#28a8ea" /></div>
      <Wifi className="mb-[2px] ml-[18px] size-[23px] shrink-0" strokeWidth={1.7} />
      <Volume2 className="mb-[2px] ml-[8px] size-[21px] shrink-0" strokeWidth={1.6} />
      <svg viewBox="0 0 20 14" className="mb-[2px] ml-[10px] h-[14px] w-5 shrink-0"><rect x=".7" y=".7" width="16.600" height="12.600" rx="3" fill="none" stroke="#fff" strokeWidth="1.300" /><rect x="3" y="3" width="11" height="8" rx="1" fill="#fff" /><path d="M18 5h1.500v4H18z" fill="#fff" /></svg>
      <div className="mb-[4px] ml-auto w-[90px] shrink-0 text-right leading-5">
        <div>18:18</div>
        <div>06/07/2025</div>
      </div>
      <svg viewBox="0 0 18 18" className="mb-[2px] ml-[11px] mr-[26px] size-[18px] shrink-0" fill="none" stroke="#fff" strokeWidth="1.400" strokeLinejoin="round" strokeLinecap="round"><path d="M8 1.500C5 1.500 3 4 3 7v4l-2 3.500h14.500L14 11v-1M6.500 15q2 4 4 0M7 6h4l-4 4.500h4M13.500.800h3.500l-3.500 4h3.500" /></svg>
    </div>
  );
}

export default function App() {
  return (
    <div className="flex h-[1080px] w-[1920px] flex-col overflow-hidden bg-[#0c4a7a] font-['Open_Sans','Noto_Sans',sans-serif] text-white">
      <TabStrip />
      <AddressBar />
      <div className="mx-[5px] flex h-[923px] shrink-0 flex-col overflow-hidden rounded-[10px]">
        <PdfToolbar />
        <Document />
      </div>
      <div className="h-[5px] shrink-0" />
      <Taskbar />
    </div>
  );
}
